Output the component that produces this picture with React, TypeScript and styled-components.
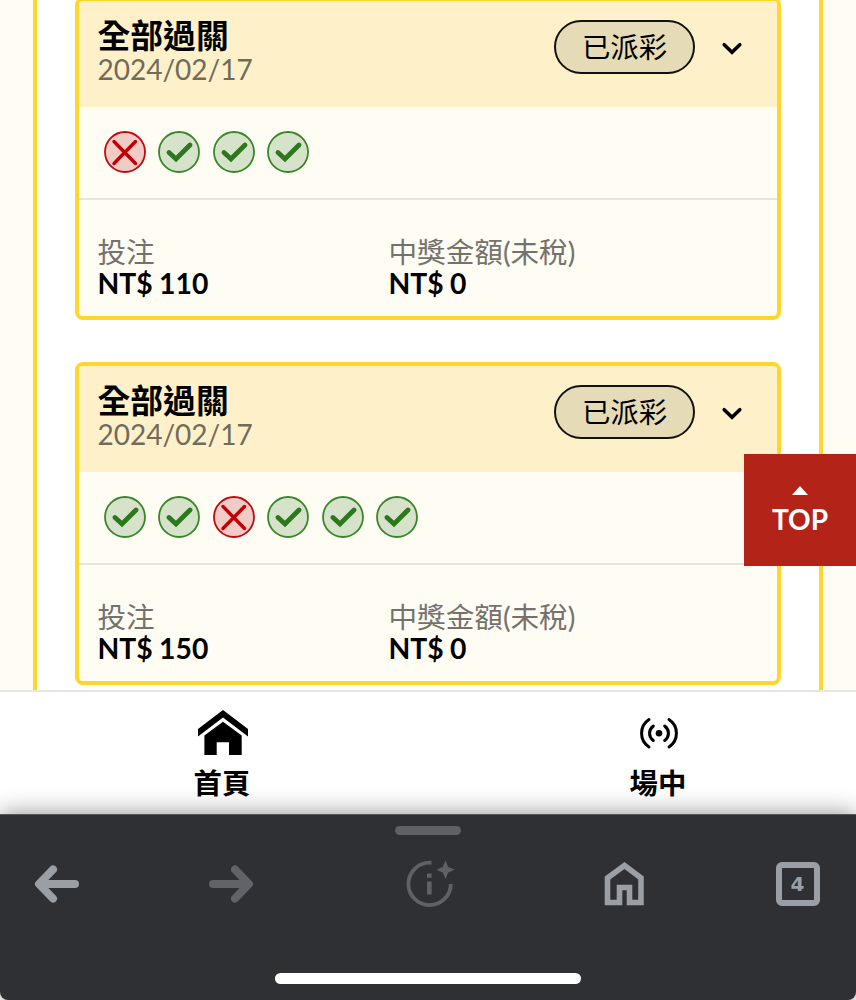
import React from 'react';
import styled, { createGlobalStyle } from 'styled-components';

const GlobalStyle = createGlobalStyle`
  *, *::before, *::after { box-sizing: border-box; }
  body {
    margin: 0;
    background: #fff;
    color: #000;
    font-family: Lato, "Noto Sans CJK TC", sans-serif;
  }
`;

const Screen = styled.div`
  position: relative;
  display: flex;
  flex-direction: column;
  width: 856px;
  height: 1000px;
  overflow: hidden;
`;

const Page = styled.main`
  display: flex;
  flex-direction: column;
  height: 690px;
  padding: 0 33px;
  overflow: hidden;
  background: #fffcf4;
`;

const Panel = styled.section`
  display: flex;
  flex-direction: column;
  flex: none;
  gap: 42px;
  height: 740px;
  margin-top: -3px;
  padding: 0 38px;
  border: solid #ffd62b;
  border-width: 0 4px;
  background: #fff;
`;

const Card = styled.article`
  flex: none;
  height: 323px;
  border: 4px solid #ffd62b;
  border-radius: 8px;
  background: #fffcf3;
  overflow: hidden;
`;

const CardHeader = styled.header`
  display: flex;
  align-items: flex-start;
  justify-content: space-between;
  height: 106px;
  padding: 19px 35px 0 18.5px;
  background: #fef1c9;
`;

const Heading = styled.div`
  margin-top: -1px;
`;

const Title = styled.h2`
  margin: 0;
  font-size: 32.8px;
  font-weight: 700;
  line-height: 34px;
`;

const DateText = styled.div`
  color: #706b5c;
  font-size: 28px;
  line-height: 33px;
`;

const HeaderSide = styled.div`
  display: flex;
  align-items: center;
  gap: 27px;
`;

const Status = styled.span`
  display: flex;
  align-items: center;
  justify-content: center;
  width: 141px;
  height: 54px;
  border: 2px solid #12110d;
  border-radius: 27px;
  background: #e5dbb6;
  font-size: 28.4px;
  font-weight: 400;
  line-height: 40px;
`;

const Results = styled.div`
  display: flex;
  gap: 12.5px;
  height: 93px;
  padding: 24px 24.5px 0;
  border-bottom: 2px solid #e8e5df;
`;

const Amounts = styled.dl`
  display: grid;
  grid-template-columns: 291px 1fr;
  margin: 0;
  padding: 36px 18.5px 0;
`;

const Label = styled.dt`
  color: #74726d;
  font-size: 28.6px;
  font-weight: 400;
  line-height: 32px;
`;

const Value = styled.dd`
  margin: 0;
  font-size: 28.3px;
  font-weight: 700;
  line-height: 30px;
  word-spacing: -0.5px;
`;

const TabBar = styled.nav`
  display: grid;
  grid-template-columns: 436px 436px;
  height: 124px;
  padding: 0 0 0 5px;
  border-top: 2px solid #e6e6e6;
  background: #fff;
`;

const Tab = styled.a`
  display: flex;
  flex-direction: column;
  align-items: center;
  padding-top: 16px;
  font-size: 28.4px;
  font-weight: 700;
  line-height: 40px;

  svg { height: 50px; margin-bottom: 5px; }
  span { margin-left: -2px; }
`;

const Browser = styled.footer`
  position: relative;
  display: flex;
  flex-direction: column;
  align-items: center;
  height: 186px;
  padding-top: 11px;
  border-top: 1px solid #56575a;
  border-radius: 0 0 8px 8px;
  background: #2f3034;
  box-shadow: 0 0 24px rgba(0, 0, 0, 0.45);
`;

const Grabber = styled.div`
  width: 66px;
  height: 9px;
  border-radius: 5px;
  background: #5f6165;
`;

const Tools = styled.div`
  display: grid;
  grid-template-columns: 174px 197px 199px 171.5px 44px;
  align-items: center;
  width: 100%;
  height: 60px;
  margin-top: 19px;
  padding-left: 34px;
`;

const TabCount = styled.span`
  display: flex;
  align-items: center;
  justify-content: center;
  width: 44px;
  height: 44px;
  border: 6px solid #9a9ea5;
  border-radius: 6px;
  color: #9a9ea5;
  font: 700 20px/32px "DejaVu Sans", sans-serif;
`;

const HomeIndicator = styled.div`
  width: 306px;
  height: 11px;
  margin-top: 59px;
  border-radius: 6px;
  background: #fff;
`;

const TopButton = styled.button`
  position: absolute;
  top: 454px;
  right: 0;
  display: flex;
  flex-direction: column;
  align-items: center;
  width: 112px;
  height: 112px;
  padding: 32px 0 0;
  border: 0;
  background: #b42318;
  color: #fff;
  font: 700 28px/34px Lato, sans-serif;

  svg { margin-bottom: 7px; }
`;

const WonIcon = () => (
  <svg width="42" height="42" viewBox="0 0 42 42" fill="none">
    <circle cx="21" cy="21" r="20" fill="#d6e2ca" stroke="#388729" strokeWidth="1.8" />
    <path d="M11 21.5 18 28 32 14" stroke="#2d771c" strokeWidth="4.8" strokeLinecap="round" />
  </svg>
);

const LostIcon = () => (
  <svg width="42" height="42" viewBox="0 0 42 42" fill="none">
    <circle cx="21" cy="21" r="20" fill="#f1cbc5" stroke="#c00a10" strokeWidth="1.8" />
    <path d="m10 10.5 21.5 22M31.5 10.5 10 32.5" stroke="#c00005" strokeWidth="3.4" strokeLinecap="round" />
  </svg>
);

const Chevron = () => (
  <svg width="20" height="14" viewBox="0 0 20 14" fill="none" overflow="visible">
    <path d="m2.200 4.700 7.800 7.500L17.800 4.700" stroke="#000" strokeWidth="3.6" strokeLinecap="round" />
  </svg>
);

const HouseIcon = () => (
  <svg width="50" height="50" viewBox="0 0 50 50">
    <path d="M25 2 50 21v7.500L25 9.600 0 28.500V21z" />
    <path d="M25 13.800 43.700 27.500V47H31V34.300H18.700V47H6.400V27.500z" />
  </svg>
);

const LiveIcon = () => (
  <svg width="40" height="50" viewBox="0 0 40 50" fill="none" stroke="#000" strokeLinecap="round">
    <circle cx="20" cy="25.2" r="3.3" fill="#000" stroke="none" />
    <path d="M10 11.5C.1 18 .1 32.5 10 39M30 11.5c9.9 6.5 9.9 21 0 27.5" strokeWidth="3" />
    <path d="M14.3 18c-5 4-5 10.500 0 14.500M25.7 18c5 4 5 10.500 0 14.500" strokeWidth="3" />
  </svg>
);

const ArrowIcon = ({ forward }: { forward?: boolean }) => (
  <svg width="46" height="40" viewBox="0 0 46 40" fill="none" stroke={forward ? '#606367' : '#9a9ea5'} strokeWidth="8" strokeLinecap="round" strokeLinejoin="round">
    <path d={forward ? 'M5 20h33M27 5.5 41 20 27 34.5' : 'M41 20H8M19 5.5 5 20l14 14.5'} />
  </svg>
);

const AssistantIcon = () => (
  <svg width="50" height="50" viewBox="0 0 50 50" fill="none">
    <path d="M26.500 3.700H24.800A21.200 21.200 0 1 0 45.800 25" stroke="#5f6165" strokeWidth="3.8" />
    <path d="M22 14.500h4.600v4.200H22zM22 22.500h4.600v13H22zM40.500 1.500l2.700 6.500 6.500 2.700-6.500 2.700-2.700 6.500-2.700-6.500-6.500-2.700 6.500-2.700z" fill="#5f6165" />
  </svg>
);

const BrowserHomeIcon = () => (
  <svg width="40" height="46" viewBox="0 0 40 46" fill="none">
    <path d="M3.500 41.500V17L20.500 4.500 37 17v24.500H25.500V26.500h-10v15z" stroke="#9a9ea5" strokeWidth="5.6" />
  </svg>
);

interface Bet {
  results: boolean[];
  stake: number;
}

const bets: Bet[] = [
  { results: [false, true, true, true], stake: 110 },
  { results: [true, true, false, true, true, true], stake: 150 },
];

const BetCard = ({ results, stake }: Bet) => (
  <Card>
    <CardHeader>
      <Heading>
        <Title>全部過關</Title>
        <DateText>2024/02/17</DateText>
      </Heading>
      <HeaderSide>
        <Status>已派彩</Status>
        <Chevron />
      </HeaderSide>
    </CardHeader>
    <Results>
      {results.map((won, i) => (won ? <WonIcon key={i} /> : <LostIcon key={i} />))}
    </Results>
    <Amounts>
      <div>
        <Label>投注</Label>
        <Value>NT$ {stake}</Value>
      </div>
      <div>
        <Label>中獎金額(未稅)</Label>
        <Value>NT$ 0</Value>
      </div>
    </Amounts>
  </Card>
);

export default function App() {
  return (
    <Screen>
      <GlobalStyle />
      <Page>
        <Panel>
          {bets.map((bet) => (
            <BetCard key={bet.stake} {...bet} />
          ))}
        </Panel>
      </Page>
      <TabBar>
        <Tab><HouseIcon /><span>首頁</span></Tab>
        <Tab><LiveIcon /><span>場中</span></Tab>
      </TabBar>
      <Browser>
        <Grabber />
        <Tools>
          <ArrowIcon />
          <ArrowIcon forward />
          <AssistantIcon />
          <BrowserHomeIcon />
          <TabCount>4</TabCount>
        </Tools>
        <HomeIndicator />
      </Browser>
      <TopButton>
        <svg width="16" height="9" viewBox="0 0 16 9" fill="#fff"><path d="M8 0 16 9H0z" /></svg>
        TOP
      </TopButton>
    </Screen>
  );
}
